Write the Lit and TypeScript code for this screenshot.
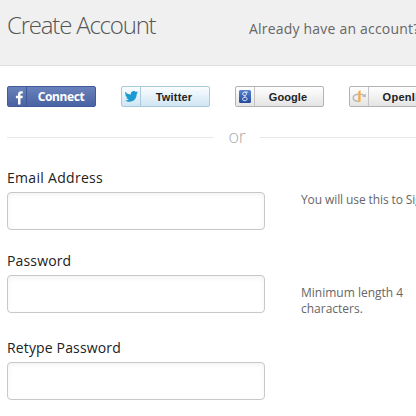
import { LitElement, html, css, svg } from "lit";
import { customElement, property } from "lit/decorators.js";

@customElement("social-button")
class SocialButton extends LitElement {
  @property() kind = "";
  @property() label = "";

  static styles = css`
    :host { display: block; flex: none; width: 89px; height: 21px; }
    .btn {
      box-sizing: border-box; width: 89px; height: 21px; display: flex; padding: 0; margin: 0;
      border: 1px solid #b3b3b3; border-radius: 2px; overflow: hidden;
      background: linear-gradient(#ffffff, #e4e4e4);
      font: bold 11px/20px "Liberation Sans", Arial, sans-serif; color: #222;
    }
    .icon { width: 18px; height: 19px; flex: none; border-right: 1px solid #c4c4c4; }
    .text { flex: 1; text-align: center; white-space: nowrap; padding-right: 2px; }
    svg { display: block; }
    .facebook { background: linear-gradient(#6a82bb, #4862a3); border-color: #405a9b; color: #fff; font: bold 12px/19px "Noto Sans", sans-serif; }
    .facebook .text { letter-spacing: -0.4px; padding-right: 0; }
    .facebook .icon { border-color: #3f5998; }
    .twitter { background: linear-gradient(#fafdff, #cfe5f2); border-color: #a9cbdd; }
    .twitter .icon { border-color: #a9cbdd; }
    .twitter .text { letter-spacing: 0.2px; }
    .google .text { letter-spacing: 0.1px; }
    .openid .text { letter-spacing: 0.3px; padding-right: 0; }
  `;

  private glyph() {
    switch (this.kind) {
      case "facebook":
        return svg`<path d="M10 17.5V11.2H7.9V8.8H10V7.4C10 5.3 11.2 4.3 13 4.3C13.8 4.3 14.4 4.4 14.8 4.5V6.6H13.8C12.8 6.6 12.5 7.1 12.5 7.8V8.8H14.8L14.5 11.2H12.5V17.5Z" fill="#fff"/>`;
      case "twitter":
        return svg`<path d="M3.2 4.8C4.7 6.6 6.6 7.4 8.8 7.5C8.5 5.4 10 4 11.8 4C12.8 4 13.5 4.4 14 5L15.8 4.3L14.9 5.8L16.2 5.5L14.7 7.1C14.8 11.4 11.9 14.8 7.7 14.8C5.9 14.8 4.3 14.4 3 13.5C4.6 13.6 5.8 13.2 6.9 12.4C5.5 12.2 4.8 11.5 4.4 10.4H5.5C4.1 9.9 3.4 8.9 3.4 7.6L4.5 7.9C3.2 7 2.6 6.1 3.2 4.8Z" fill="#1c9ad0"/>`;
      case "google":
        return svg`<defs><linearGradient id="g" x1="0" y1="0" x2="0" y2="1"><stop offset="0" stop-color="#5683cf"/><stop offset="1" stop-color="#234a9c"/></linearGradient></defs>
          <rect x="3" y="3" width="12" height="13" rx="1.5" fill="url(#g)"/>
          <path d="M11.8 5.1H8.8C7.4 5.1 6.8 5.8 6.8 6.8C6.8 7.9 7.5 8.6 8.6 8.6C9.7 8.6 10.4 7.9 10.4 6.8C10.4 6 10 5.4 9.4 5.1M8.9 8.6C8.3 9.2 8.9 9.6 9.5 10C10.6 10.6 11 11.2 11 12C11 13.1 10.1 13.7 8.8 13.7C7.4 13.7 6.6 13.1 6.6 12.1C6.6 11 7.6 10.4 9.2 10.4" fill="none" stroke="#fff" stroke-width="0.9"/>`;
      default:
        return svg`<path d="M8.7 7.2C5.2 7.3 3.2 8.7 3.2 10.8C3.2 13 5.3 14.3 8.7 14.4M10.3 7.2C12 7.3 13.2 7.7 14.2 8.4" fill="none" stroke="#b4b7ba" stroke-width="1.4"/>
          <path d="M15.8 6.8V10.2L11.8 9.4Z" fill="#b4b7ba"/>
          <path d="M8.2 4.2L10.6 3.2V14.5L8.2 15.6Z" fill="#f5ac50"/>`;
    }
  }

  render() {
    return html`<button class="btn ${this.kind}">
      <span class="icon"><svg width="18" height="19" viewBox="0 0 18 19">${this.glyph()}</svg></span>
      <span class="text">${this.label}</span>
    </button>`;
  }
}

@customElement("app-root")
class AppRoot extends LitElement {
  static styles = css`
    :host { display: block; width: 416px; height: 416px; overflow: hidden; background: #fff; font-family: "Open Sans", sans-serif; color: #222; }
    .header { box-sizing: border-box; height: 66px; display: flex; background: #f0f0f0; border-bottom: 1px solid #dedede; white-space: nowrap; }
    .title { margin: 0; padding: 9px 0 0 7px; width: 249px; box-sizing: border-box; flex: none; font-size: 24px; line-height: 32px; font-weight: 300; letter-spacing: -1.2px; color: #555; }
    .already { padding-top: 19px; font-size: 14px; line-height: 20px; letter-spacing: 0.2px; color: #666; }
    .social { display: flex; gap: 25px; padding: 20px 0 0 7px; height: 21px; }
    .divider { display: flex; align-items: center; height: 24px; margin: 18px 0 0 7px; font-size: 18px; line-height: 22px; font-weight: 300; color: #aaa; }
    .rule { height: 1px; background: #e8e8e8; margin-top: 1px; }
    .left { width: 207px; }
    .right { flex: 1; }
    .or { width: 46px; text-align: center; padding-bottom: 2px; letter-spacing: -0.2px; }
    .row { display: flex; margin-left: 7px; height: 87px; }
    .email { height: 83px; margin-top: 19px; }
    .field { display: block; width: 258px; flex: none; font-size: 14px; line-height: 20px; letter-spacing: 0.15px; }
    .email .field { letter-spacing: 0.3px; }
    .input { display: block; box-sizing: border-box; width: 258px; height: 38px; margin: 4px 0 0; border: 1px solid #c8c8c8; border-radius: 4px; background: #fff; box-shadow: inset 0 2px 5px #0000000d; outline: none; padding: 0 8px; }
    .hint { margin-left: 36px; padding-top: 24px; font-size: 12px; line-height: 16px; letter-spacing: -0.1px; color: #666; white-space: nowrap; }
    .wrap { width: 105px; padding-top: 34px; white-space: normal; letter-spacing: 0; }
  `;

  render() {
    return html`
      <div class="header">
        <h1 class="title">Create Account</h1>
        <div class="already">Already have an account?</div>
      </div>
      <div class="social">
        <social-button kind="facebook" label="Connect"></social-button>
        <social-button kind="twitter" label="Twitter"></social-button>
        <social-button kind="google" label="Google"></social-button>
        <social-button kind="openid" label="OpenID"></social-button>
      </div>
      <div class="divider"><div class="rule left"></div><div class="or">or</div><div class="rule right"></div></div>
      <div class="row email">
        <label class="field">Email Address<input class="input" type="email"></label>
        <div class="hint">You will use this to Sign In</div>
      </div>
      <div class="row">
        <label class="field">Password<input class="input" type="password"></label>
        <div class="hint wrap">Minimum length 4 characters.</div>
      </div>
      <div class="row">
        <label class="field">Retype Password<input class="input" type="password"></label>
      </div>
    `;
  }
}
